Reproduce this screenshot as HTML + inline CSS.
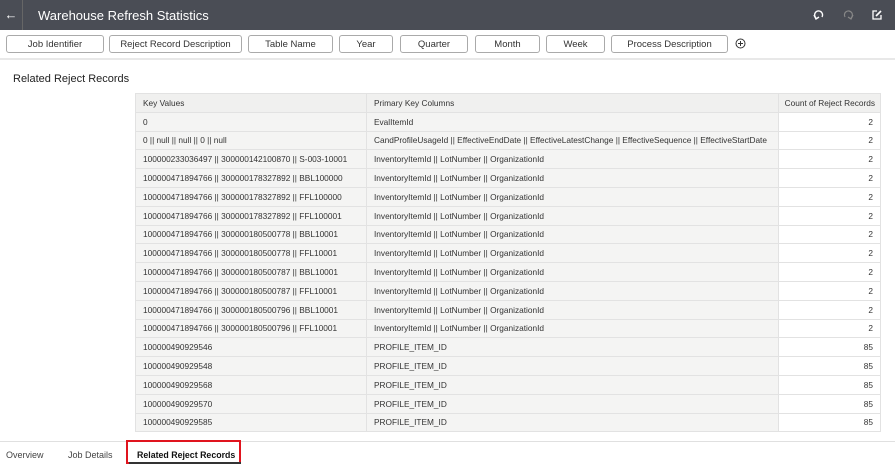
<!DOCTYPE html><html><head><style>
*{margin:0;padding:0;box-sizing:border-box}
body{width:895px;height:465px;overflow:hidden;background:#fff;font-family:"Liberation Sans",sans-serif;color:#333;position:relative}
.hdr{position:absolute;left:0;top:0;width:895px;height:30px;background:#4a4d55;color:#fff}
.hdr .back{position:absolute;left:0;top:0;width:23px;height:30px;border-right:1px solid #666;font-size:13px;text-align:center;line-height:29px}
.hdr .t{position:absolute;left:38px;top:8px;font-size:13px}
.btn{position:absolute;top:35px;height:18px;border:1px solid #aaa;border-radius:3px;font-size:9.5px;text-align:center;line-height:17px;color:#333;background:#fff}
.sep{position:absolute;left:0;top:58px;width:895px;height:2px;background:#e8e8e8}
.title{position:absolute;left:13px;top:73px;font-size:11px;color:#222}
table{position:absolute;left:135px;top:93px;border-collapse:collapse;font-size:8.3px;table-layout:fixed;width:745px}
td{height:18.8px;border:1px solid #e2e2e2;padding:0 7px;white-space:nowrap;overflow:hidden;background:#f4f4f3}
td.c{background:#fff;text-align:right}
tr.h td{background:#f0f0ef}
tr.h td.c{background:#f0f0ef;padding:0 5px}
.tabs{position:absolute;left:0;top:441px;width:895px;height:1px;background:#e0e0e0}
.tab{position:absolute;top:450px;font-size:9px;color:#444}
</style></head><body>
<div class="hdr"><div class="back">←</div><div class="t">Warehouse Refresh Statistics</div>
<svg style="position:absolute;left:813px;top:9px" width="12" height="12" viewBox="0 0 12 12"><path d="M3 9 A4 4 0 1 1 9 8" fill="none" stroke="#fff" stroke-width="1.4"/><path d="M1 6 L3 10 L6 8" fill="none" stroke="#fff" stroke-width="1.4"/></svg>
<svg style="position:absolute;left:842px;top:9px" width="12" height="12" viewBox="0 0 12 12"><path d="M9 9 A4 4 0 1 0 3 8" fill="none" stroke="#888" stroke-width="1.2"/><path d="M11 6 L9 10 L6 8" fill="none" stroke="#888" stroke-width="1.2"/></svg>
<svg style="position:absolute;left:871px;top:9px" width="12" height="12" viewBox="0 0 12 12"><path d="M6 2 H2 V10 H10 V6" fill="none" stroke="#fff" stroke-width="1.3"/><path d="M5 7 L10 2" stroke="#fff" stroke-width="1.6"/></svg>
</div>
<div class="btn" style="left:6px;width:98px">Job Identifier</div>
<div class="btn" style="left:109px;width:133px">Reject Record Description</div>
<div class="btn" style="left:248px;width:85px">Table Name</div>
<div class="btn" style="left:339px;width:54px">Year</div>
<div class="btn" style="left:400px;width:68px">Quarter</div>
<div class="btn" style="left:475px;width:65px">Month</div>
<div class="btn" style="left:546px;width:59px">Week</div>
<div class="btn" style="left:611px;width:117px">Process Description</div>
<svg style="position:absolute;left:735px;top:38px" width="11" height="11" viewBox="0 0 11 11"><circle cx="5.5" cy="5.5" r="4.5" fill="none" stroke="#333" stroke-width="1"/><path d="M5.5 3v5M3 5.5h5" stroke="#333" stroke-width="1"/></svg>
<div class="sep"></div>
<div class="title">Related Reject Records</div>
<table>
<colgroup><col style="width:231px"><col style="width:412px"><col style="width:102px"></colgroup>
<tr class="h"><td>Key Values</td><td>Primary Key Columns</td><td class="c">Count of Reject Records</td></tr>
<tr><td>0</td><td>EvalItemId</td><td class="c">2</td></tr>
<tr><td>0 || null || null || 0 || null</td><td>CandProfileUsageId || EffectiveEndDate || EffectiveLatestChange || EffectiveSequence || EffectiveStartDate</td><td class="c">2</td></tr>
<tr><td>100000233036497 || 300000142100870 || S-003-10001</td><td>InventoryItemId || LotNumber || OrganizationId</td><td class="c">2</td></tr>
<tr><td>100000471894766 || 300000178327892 || BBL100000</td><td>InventoryItemId || LotNumber || OrganizationId</td><td class="c">2</td></tr>
<tr><td>100000471894766 || 300000178327892 || FFL100000</td><td>InventoryItemId || LotNumber || OrganizationId</td><td class="c">2</td></tr>
<tr><td>100000471894766 || 300000178327892 || FFL100001</td><td>InventoryItemId || LotNumber || OrganizationId</td><td class="c">2</td></tr>
<tr><td>100000471894766 || 300000180500778 || BBL10001</td><td>InventoryItemId || LotNumber || OrganizationId</td><td class="c">2</td></tr>
<tr><td>100000471894766 || 300000180500778 || FFL10001</td><td>InventoryItemId || LotNumber || OrganizationId</td><td class="c">2</td></tr>
<tr><td>100000471894766 || 300000180500787 || BBL10001</td><td>InventoryItemId || LotNumber || OrganizationId</td><td class="c">2</td></tr>
<tr><td>100000471894766 || 300000180500787 || FFL10001</td><td>InventoryItemId || LotNumber || OrganizationId</td><td class="c">2</td></tr>
<tr><td>100000471894766 || 300000180500796 || BBL10001</td><td>InventoryItemId || LotNumber || OrganizationId</td><td class="c">2</td></tr>
<tr><td>100000471894766 || 300000180500796 || FFL10001</td><td>InventoryItemId || LotNumber || OrganizationId</td><td class="c">2</td></tr>
<tr><td>100000490929546</td><td>PROFILE_ITEM_ID</td><td class="c">85</td></tr>
<tr><td>100000490929548</td><td>PROFILE_ITEM_ID</td><td class="c">85</td></tr>
<tr><td>100000490929568</td><td>PROFILE_ITEM_ID</td><td class="c">85</td></tr>
<tr><td>100000490929570</td><td>PROFILE_ITEM_ID</td><td class="c">85</td></tr>
<tr><td>100000490929585</td><td>PROFILE_ITEM_ID</td><td class="c">85</td></tr>
</table>
<div class="tabs"></div>
<div class="tab" style="left:6px">Overview</div>
<div class="tab" style="left:68px">Job Details</div>
<div style="position:absolute;left:126px;top:440px;width:115px;height:24px;border:2px solid #e0141e"></div>
<div style="position:absolute;left:129px;top:462px;width:112px;height:2px;background:#333"></div>
<div class="tab" style="left:137px;font-weight:bold;color:#111;font-size:8.8px">Related Reject Records</div>
</body></html>
